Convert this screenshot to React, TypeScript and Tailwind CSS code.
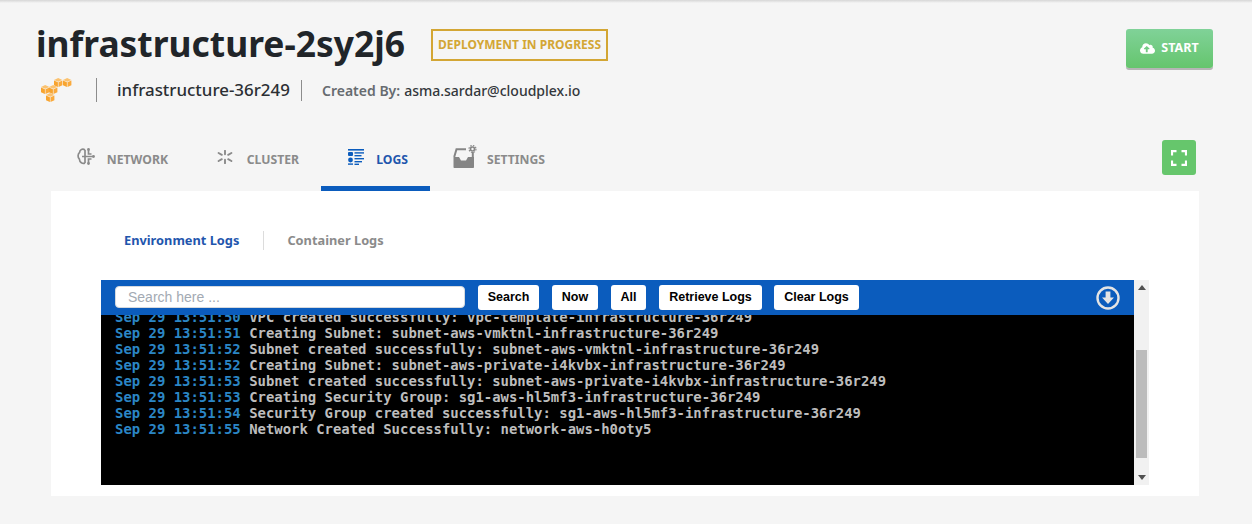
import React from "react";
import { FaCloudUploadAlt } from "react-icons/fa";

const logs = [
  ["Sep 29 13:51:50", "VPC created successfully: vpc-template-infrastructure-36r249"],
  ["Sep 29 13:51:51", "Creating Subnet: subnet-aws-vmktnl-infrastructure-36r249"],
  ["Sep 29 13:51:52", "Subnet created successfully: subnet-aws-vmktnl-infrastructure-36r249"],
  ["Sep 29 13:51:52", "Creating Subnet: subnet-aws-private-i4kvbx-infrastructure-36r249"],
  ["Sep 29 13:51:53", "Subnet created successfully: subnet-aws-private-i4kvbx-infrastructure-36r249"],
  ["Sep 29 13:51:53", "Creating Security Group: sg1-aws-hl5mf3-infrastructure-36r249"],
  ["Sep 29 13:51:54", "Security Group created successfully: sg1-aws-hl5mf3-infrastructure-36r249"],
  ["Sep 29 13:51:55", "Network Created Successfully: network-aws-h0oty5"],
];

const Cube = ({ x, y }: { x: number; y: number }) => (
  <g transform={`translate(${x} ${y})`}>
    <polygon points="0,2 4.2,0 8.4,2 4.2,3.8" fill="#fbc26f" />
    <polygon points="0,2.5 3.9,4.3 3.9,9 0,7.2" fill="#f8a42f" />
    <polygon points="8.4,2.5 4.5,4.3 4.5,9 8.4,7.2" fill="#faaa3c" />
  </g>
);

const AwsIcon = () => (
  <svg width="36" height="24" viewBox="0 0 36 24">
    <Cube x={18} y={0} />
    <Cube x={27} y={0} />
    <Cube x={5} y={7} />
    <Cube x={13} y={7} />
    <Cube x={10} y={15} />
  </svg>
);

const NetworkIcon = () => (
  <svg width="18" height="20" viewBox="0 0 18 20" fill="none" stroke="#8a8a8a" strokeWidth="1.7">
    <path d="M8 3C5.5 1.2 2.8 2.6 2.6 5.4.6 7 .6 10.6 2.4 12.2 2.6 15.4 5.6 17.4 8 16" />
    <path d="M5 9.5h11M8 3v13M11.5 3v4h3M11.5 16v-4h3" />
    <circle cx="11.5" cy="2.5" r="1.4" fill="#8a8a8a" stroke="none" />
    <circle cx="11.5" cy="16.5" r="1.4" fill="#8a8a8a" stroke="none" />
    <circle cx="16.5" cy="9.5" r="1.4" fill="#8a8a8a" stroke="none" />
  </svg>
);

const ClusterIcon = () => (
  <svg width="16" height="14" viewBox="0 0 16 14" stroke="#8a8a8a" strokeWidth="1.9" strokeLinecap="round">
    <path d="M8 .8v3.4M8 9.800v3.400M1.600 3l3.200 1.800M11.200 9.200l3.200 1.800M1.600 11l3.200-1.800M11.200 4.800l3.200-1.800" />
  </svg>
);

const LogsIcon = () => (
  <svg width="16" height="16" viewBox="0 0 16 16" fill="#0b5cbd">
    <rect x="0" y="0" width="16" height="1.6" />
    <rect x="0" y="3" width="5" height="4" rx="1" />
    <rect x="6.5" y="3.2" width="9.5" height="1.4" />
    <rect x="6.5" y="6" width="7" height="1.4" />
    <circle cx="2.5" cy="11" r="2.4" />
    <rect x="6.5" y="9" width="9.5" height="1.4" />
    <rect x="6.5" y="12" width="7.5" height="1.4" />
    <rect x="0" y="14.4" width="5" height="1.4" />
    <rect x="6.5" y="14.6" width="4.5" height="1.4" />
  </svg>
);

const SettingsIcon = () => (
  <svg width="24" height="24" viewBox="0 0 24 24">
    <path d="M.5 12H6l2 3.5h5l2-3.500h6v10c0 .6-.4 1-1 1H1.500c-.6 0-1-.4-1-1Z" fill="#858585" />
    <path d="M1.200 12 3.500 4.200H13M19.800 7v5" fill="none" stroke="#858585" strokeWidth="2" />
    <circle cx="19.500" cy="4" r="2" fill="none" stroke="#858585" strokeWidth="1.6" />
    <circle cx="19.500" cy="4" r="3.500" fill="none" stroke="#858585" strokeWidth="1.1" strokeDasharray="1.5 1.25" />
  </svg>
);

const ExpandIcon = () => (
  <svg width="16" height="16" viewBox="0 0 16 16" fill="none" stroke="#fff" strokeWidth="2.2">
    <path d="M1 5.5V1.200h4.500M10.500 1.200H15v4.300M15 10.500v4.300h-4.500M5.500 14.800H1v-4.300" />
  </svg>
);

const DownCircleIcon = () => (
  <svg width="24" height="24" viewBox="0 0 24 24">
    <circle cx="12" cy="12" r="10.5" fill="none" stroke="#e4e4e4" strokeWidth="2.4" />
    <path d="M9.600 5.500h4.800v6H18L12 18l-6-6.500h3.600Z" fill="#e4e4e4" />
  </svg>
);

const Tab = ({ icon, label, active, className }: { icon: React.ReactNode; label: string; active?: boolean; className: string }) => (
  <div className={`flex h-[52px] items-start border-b-[5px] pt-[8px] ${active ? "border-[#0b5cbd]" : "border-transparent"} ${className}`}>
    <span className="flex h-[20px] items-center">{icon}</span>
    <span className={`ml-auto text-[12.2px] leading-[26px] font-bold ${active ? "text-[#1f56ad]" : "text-[#8b8b8b]"}`}>{label}</span>
  </div>
);

const ToolButton = ({ label, className }: { label: string; className: string }) => (
  <button className={`h-[25px] rounded-[3px] bg-white text-center text-[12.5px] font-bold text-black ${className}`}>{label}</button>
);

export default function App() {
  return (
    <div className="relative h-[524px] overflow-hidden bg-[#f5f5f5] font-['Noto_Sans',sans-serif]">
      <div className="h-[3px] bg-gradient-to-b from-[#d6d6d6] to-[#f5f5f5]" />

      <div className="flex items-start justify-between pr-[39px] pl-[36px]">
        <div>
          <div className="mt-[20px] flex h-[44px] items-center">
            <h1 className="mb-[4px] w-[368px] text-[35.4px] leading-[44px] font-bold whitespace-nowrap text-[#212529]">infrastructure-2sy2j6</h1>
            <span className="ml-[27px] flex h-[32px] w-[177px] items-center justify-center border-[2px] border-[#d3a634] text-[12px] font-bold whitespace-nowrap text-[#d3a634]">
              DEPLOYMENT IN PROGRESS
            </span>
          </div>
          <div className="mt-[11px] flex h-[24px] items-center">
            <AwsIcon />
            <span className="ml-[24px] h-[24px] w-px bg-[#8c8c8c]" />
            <span className="ml-[20px] w-[184px] text-[16.9px] font-medium whitespace-nowrap text-[#2b2f33]">infrastructure-36r249</span>
            <span className="h-[21px] w-px bg-[#8c8c8c]" />
            <span className="ml-[20px] text-[14px] font-semibold text-[#666b70]">Created By:</span>
            <span className="ml-[4px] text-[14px] font-medium text-[#33373b]">asma.sardar@cloudplex.io</span>
          </div>
        </div>
        <button className="mt-[26px] flex h-[39px] w-[87px] items-center justify-center gap-[6px] rounded-[3px] bg-gradient-to-b from-[#80d298] to-[#65c56d] text-[12.5px] font-bold text-white shadow-[0_2px_0_#b5b5b5]">
          <FaCloudUploadAlt className="text-[15px]" />
          START
        </button>
      </div>

      <div className="mt-[37px] flex items-start pr-[56px] pl-[77px]">
        <Tab icon={<NetworkIcon />} label="NETWORK" className="w-[91px]" />
        <Tab icon={<ClusterIcon />} label="CLUSTER" className="ml-[49px] w-[82px]" />
        <div className="ml-[22px] w-[109px]">
          <Tab icon={<LogsIcon />} label="LOGS" active className="w-full pr-[22px] pl-[27px]" />
        </div>
        <Tab icon={<SettingsIcon />} label="SETTINGS" className="ml-[23px] w-[92px]" />
        <button className="mt-[1px] ml-auto flex h-[35px] w-[34px] items-center justify-center rounded-[3px] bg-[#66c66c]">
          <ExpandIcon />
        </button>
      </div>

      <div className="ml-[51px] h-[305px] w-[1148px] bg-white pt-[40px] pl-[50px]">
        <div className="flex h-[19px] items-center pl-[23px] text-[12.8px] font-bold">
          <span className="text-[#1f56ad]">Environment Logs</span>
          <span className="ml-[24px] h-[19px] w-px bg-[#dcdcdc]" />
          <span className="ml-[23px] text-[#8b8b8b]">Container Logs</span>
        </div>

        <div className="mt-[30px] flex h-[205px] w-[1048px]">
          <div className="flex w-[1033px] flex-col">
            <div className="flex h-[35px] items-center bg-[#0b5cbd] pr-[14px] pl-[14px] font-['Liberation_Sans',sans-serif]">
              <input
                placeholder="Search here ..."
                className="mb-[1px] h-[22px] w-[350px] rounded-[4px] border border-[#d5d9de] bg-white px-[12px] text-[14px] outline-none placeholder:text-[#a3aab3]"
              />
              <ToolButton label="Search" className="ml-[13px] w-[61px]" />
              <ToolButton label="Now" className="ml-[13px] w-[46px]" />
              <ToolButton label="All" className="ml-[13px] w-[35px]" />
              <ToolButton label="Retrieve Logs" className="ml-[13px] w-[103px]" />
              <ToolButton label="Clear Logs" className="ml-[12px] w-[85px]" />
              <span className="ml-auto">
                <DownCircleIcon />
              </span>
            </div>
            <div className="h-[170px] overflow-hidden bg-black font-['DejaVu_Sans_Mono',monospace] text-[13.93px] leading-[16px] font-bold whitespace-pre">
              <div className="-mt-[6px] pl-[14px]">
                {logs.map(([time, text], i) => (
                  <div key={i}>
                    <span className="text-[#2b86c5]">{time}</span>
                    <span className="text-[#bdbdbd]"> {text}</span>
                  </div>
                ))}
              </div>
            </div>
          </div>
          <div className="flex w-[15px] flex-col items-center bg-[#f1f1f1]">
            <div className="mt-[5px] h-0 w-0 border-x-[4px] border-b-[5px] border-x-transparent border-b-[#505050]" />
            <div className="mt-[60px] h-[108px] w-[11px] bg-[#bcbcbc]" />
            <div className="mt-[17px] h-0 w-0 border-x-[4px] border-t-[5px] border-x-transparent border-t-[#505050]" />
          </div>
        </div>
      </div>
    </div>
  );
}
